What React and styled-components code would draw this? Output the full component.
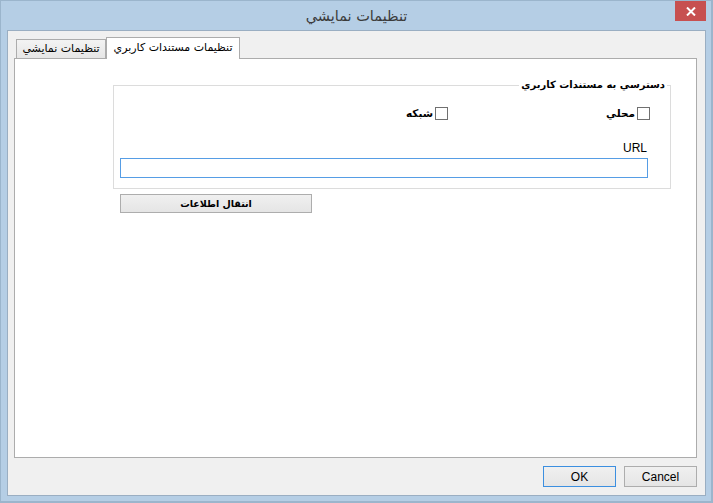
import React from "react";
import styled, { createGlobalStyle } from "styled-components";

const GlobalStyle = createGlobalStyle`
  html, body {
    margin: 0;
    padding: 0;
    background: #ffffff;
  }
  body {
    font-family: "DejaVu Sans", "Liberation Sans", sans-serif;
  }
  * {
    box-sizing: border-box;
  }
`;

const Window = styled.div`
  width: 713px;
  height: 503px;
  display: flex;
  flex-direction: column;
  background: #b5cee5;
  border: 1px solid #9bb5cc;
  border-right-width: 2px;
  border-bottom-width: 2px;
  padding: 0 5px 5px 6px;
`;

const TitleBar = styled.div`
  height: 29px;
  display: grid;
  grid-template-columns: 1fr auto 1fr;
  align-items: start;
`;

const Title = styled.div`
  grid-column: 2;
  margin-top: 7px;
  font-size: 14.5px;
  line-height: 17px;
  color: #3b3b3b;
  direction: rtl;
`;

const CloseButton = styled.div`
  grid-column: 3;
  justify-self: end;
  width: 31px;
  height: 20px;
  background: #c75050;
  display: flex;
  align-items: center;
  justify-content: center;
`;

const Client = styled.div`
  flex: 1;
  display: flex;
  flex-direction: column;
  background: #f0f0f0;
  border: 1px solid #9aaec2;
  padding: 6px 8px 8px 6px;
`;

const TabControl = styled.div`
  flex: 1;
  display: flex;
  flex-direction: column;
`;

const TabStrip = styled.div`
  height: 21px;
  display: flex;
  align-items: flex-end;
  padding-left: 2px;
`;

const Tab = styled.div`
  position: relative;
  width: ${(p) => p.$width}px;
  height: ${(p) => (p.$active ? 22 : 19)}px;
  margin-bottom: ${(p) => (p.$active ? -1 : 0)}px;
  z-index: ${(p) => (p.$active ? 1 : 0)};
  border: 1px solid #acacac;
  border-bottom: none;
  background: ${(p) =>
    p.$active ? "#ffffff" : "linear-gradient(#f3f3f3, #e6e6e6)"};
  direction: rtl;
  font-size: 11px;
  line-height: ${(p) => (p.$active ? 20 : 18)}px;
  color: #000;
  text-align: center;
  white-space: nowrap;
`;

const Panel = styled.div`
  flex: 1;
  background: #ffffff;
  border: 1px solid #acacac;
  padding: 19px 0 0 98px;
`;

const Group = styled.fieldset`
  width: 558px;
  margin: 0;
  padding: 0 0 10px 0;
  border: 1px solid #dcdcdc;
  direction: rtl;
`;

const Legend = styled.legend`
  margin-right: 3px;
  padding: 0 2px;
  font-size: 10px;
  font-weight: bold;
  line-height: 14px;
  color: #000;
`;

const CheckRow = styled.div`
  display: flex;
  margin-top: 15px;
  padding-right: 20px;
`;

const CheckItem = styled.label`
  width: 202px;
  display: flex;
  align-items: center;
  gap: 2px;
  font-size: 10.5px;
  font-weight: bold;
  line-height: 13px;
`;

const CheckBox = styled.span`
  width: 13px;
  height: 13px;
  border: 1px solid #707070;
  background: #ffffff;
`;

const FieldLabel = styled.div`
  margin-top: 21px;
  padding-right: 23px;
  font-family: "Liberation Sans", sans-serif;
  font-size: 12px;
  line-height: 14px;
  color: #000;
`;

const TextInput = styled.div`
  height: 20px;
  margin: 3px 22px 0 6px;
  border: 1px solid #569de5;
  background: #ffffff;
`;

const Button = styled.div`
  width: ${(p) => p.$width}px;
  height: ${(p) => p.$height}px;
  border: 1px solid ${(p) => (p.$default ? "#3c8fe0" : "#adadad")};
  background: linear-gradient(#f0f0f0, #e5e5e5);
  display: flex;
  align-items: center;
  justify-content: center;
  color: #000;
  white-space: nowrap;
`;

const TransferButton = styled(Button)`
  margin: 5px 0 0 7px;
  direction: rtl;
  font-size: 9.5px;
  font-weight: bold;
`;

const Footer = styled.div`
  margin-top: 8px;
  display: flex;
  justify-content: flex-end;
  gap: 8px;
`;

const FooterButton = styled(Button)`
  font-family: "Liberation Sans", sans-serif;
  font-size: 12px;
`;

const App = () => {
  return (
    <>
      <GlobalStyle />
      <Window>
        <TitleBar>
          <Title>تنظيمات نمايشي</Title>
          <CloseButton>
            <svg width="10" height="9" viewBox="0 0 10 9">
              <path d="M1 0.5 L9 8.5 M9 0.5 L1 8.5" stroke="#fff" strokeWidth="2" />
            </svg>
          </CloseButton>
        </TitleBar>
        <Client>
          <TabControl>
            <TabStrip>
              <Tab $width={90}>تنظيمات نمايشي</Tab>
              <Tab $width={134} $active>
                تنظيمات مستندات کاربري
              </Tab>
            </TabStrip>
            <Panel>
              <Group>
                <Legend>دسترسي به مستندات کاربري</Legend>
                <CheckRow>
                  <CheckItem>
                    <CheckBox />
                    محلي
                  </CheckItem>
                  <CheckItem>
                    <CheckBox />
                    شبکه
                  </CheckItem>
                </CheckRow>
                <FieldLabel>URL</FieldLabel>
                <TextInput />
              </Group>
              <TransferButton $width={192} $height={19}>
                انتقال اطلاعات
              </TransferButton>
            </Panel>
          </TabControl>
          <Footer>
            <FooterButton $width={73} $height={21} $default>
              OK
            </FooterButton>
            <FooterButton $width={73} $height={21}>
              Cancel
            </FooterButton>
          </Footer>
        </Client>
      </Window>
    </>
  );
};

export default App;
